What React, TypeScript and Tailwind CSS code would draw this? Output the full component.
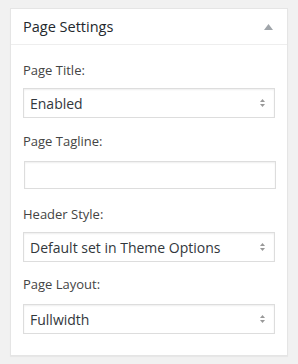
import React from "react";

function UpDown() {
  return (
    <svg width="5" height="8" viewBox="0 0 5 8" className="absolute right-[9px] top-1/2 -translate-y-1/2">
      <polygon points="2.5,0 5,3 0,3" fill="#999" />
      <polygon points="0,5 5,5 2.5,8" fill="#999" />
    </svg>
  );
}

function Select({ value }: { value: string }) {
  return (
    <div className="relative h-[30px] border border-[#ddd] bg-white shadow-[inset_0_1px_2px_rgba(0,0,0,0.07)] flex items-center pl-[6px] text-[14px] text-[#32373c]">
      {value}
      <UpDown />
    </div>
  );
}

function Label({ text }: { text: string }) {
  return <div className="text-[13px] leading-[20px] text-[#444]">{text}</div>;
}

export default function App() {
  return (
    <div className="min-h-[364px] bg-[#f1f1f1] pt-[8px] px-[10px] font-['Open_Sans',sans-serif]">
      <div className="border border-[#e5e5e5] bg-white shadow-[0_1px_1px_rgba(0,0,0,0.04)]">
        <div className="h-[36px] border-b border-[#eee] flex items-center justify-between px-[12px]">
          <span className="text-[14.5px] text-[#23282d]">Page Settings</span>
          <svg width="9" height="6" viewBox="0 0 9 6" className="mr-[2px]">
            <polygon points="4.5,0 9,6 0,6" fill="#a0a5aa" />
          </svg>
        </div>
        <div className="px-[12px] pt-[15px] pb-[21px]">
          <Label text="Page Title:" />
          <div className="mt-[8px]">
            <Select value="Enabled" />
          </div>
          <div className="mt-[13px]">
            <Label text="Page Tagline:" />
          </div>
          <div className="mt-[10px] h-[28px] border border-[#ddd] bg-white shadow-[inset_0_1px_2px_rgba(0,0,0,0.07)] ml-[1px] mr-[-1px]" />
          <div className="mt-[15px]">
            <Label text="Header Style:" />
          </div>
          <div className="mt-[8px]">
            <Select value="Default set in Theme Options" />
          </div>
          <div className="mt-[12px]">
            <Label text="Page Layout:" />
          </div>
          <div className="mt-[10px]">
            <Select value="Fullwidth" />
          </div>
        </div>
      </div>
    </div>
  );
}
